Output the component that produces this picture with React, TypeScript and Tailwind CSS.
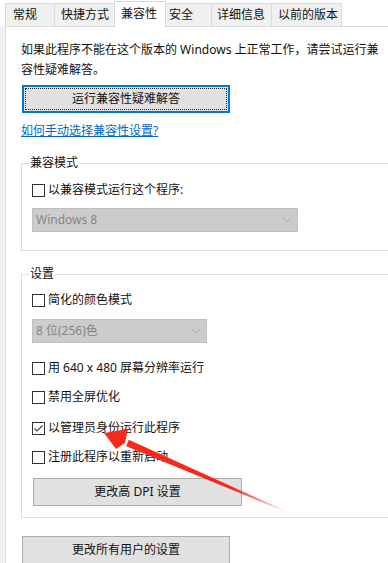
import type { ReactNode } from 'react';

const tabs = [
  { label: '常规', cls: 'w-[50px] pl-[7px]' },
  { label: '快捷方式', cls: 'w-[61px] pl-[6px]' },
  { label: '兼容性', cls: 'w-[52px] pl-[6px]', active: true },
  { label: '安全', cls: 'w-[47px] pl-[3px]' },
  { label: '详细信息', cls: 'w-[61px] pl-[5px]' },
  { label: '以前的版本', cls: 'w-[71px] pl-[6px]' },
];

function CheckRow({ label, checked, className = '' }: { label: string; checked?: boolean; className?: string }) {
  return (
    <div className={`flex h-[20px] items-center gap-[3px] whitespace-nowrap ${className}`}>
      <span className="flex h-[13px] w-[13px] shrink-0 items-center justify-center border border-[#333333] bg-white">
        {checked && (
          <svg width="11" height="11" viewBox="0 0 11 11">
            <path d="M1.5 5.5 L4 8 L9.5 2.5" fill="none" stroke="#444444" strokeWidth="1.1" />
          </svg>
        )}
      </span>
      <span>{label}</span>
    </div>
  );
}

function Dropdown({ value, className = '' }: { value: string; className?: string }) {
  return (
    <div
      className={`flex h-[24px] items-center justify-between border border-[#bfbfbf] bg-[#cccccc] pl-[3px] pr-[5px] text-[#858585] ${className}`}
    >
      <span>{value}</span>
      <svg width="10" height="6" viewBox="0 0 10 6">
        <path d="M0.5 0.5 L5 5 L9.5 0.5" fill="none" stroke="#a8a8a8" strokeWidth="1" />
      </svg>
    </div>
  );
}

function GroupBox({ title, className = '', children }: { title: string; className?: string; children: ReactNode }) {
  return (
    <div className={`relative ml-[15px] w-[400px] border border-[#dcdcdc] pl-[10px] ${className}`}>
      <span className="absolute left-[7px] top-[-11px] bg-white px-px leading-[20px]">{title}</span>
      {children}
    </div>
  );
}

export default function App() {
  return (
    <div className="relative flex h-[563px] w-[388px] flex-col overflow-hidden bg-white text-[12px] leading-[20px] text-[#111111] font-['Noto_Sans','Noto_Sans_CJK_SC',sans-serif]">
      {/* tab strip */}
      <div className="flex h-[26px] shrink-0 items-end pl-[5px]">
        {tabs.map((t, i) =>
          t.active ? (
            <div
              key={t.label}
              className={`relative z-10 -mb-px -ml-px flex h-[26px] items-center border border-b-0 border-[#d9d9d9] bg-white pb-[2px] ${t.cls}`}
            >
              {t.label}
            </div>
          ) : (
            <div
              key={t.label}
              className={`flex h-[23px] items-center border border-b-0 border-[#d9d9d9] bg-[#f0f0f0] whitespace-nowrap ${i > 0 ? '-ml-px' : ''} ${t.cls}`}
            >
              {t.label}
            </div>
          )
        )}
      </div>

      <div className="flex flex-1">
        <div className="w-[5px] shrink-0 bg-[#f0f0f0]" />
        <div className="flex-1 border-l border-t border-[#d9d9d9] bg-white">
          <p className="mt-[13px] pl-[15px] whitespace-nowrap">
            如果此程序不能在这个版本的 Windows 上正常工作，请尝试运行兼
            <br />
            容性疑难解答。
          </p>

          <div className="ml-[16px] mt-[5px] flex h-[28px] w-[208px] items-center justify-center border-2 border-[#0078d7] bg-[#e1e1e1] p-px">
            <div className="flex h-full w-full items-center justify-center border border-dotted border-[#222222]">
              运行兼容性疑难解答
            </div>
          </div>

          <div className="mt-[8px] pl-[15px]">
            <span className="text-[#0066cc] underline">如何手动选择兼容性设置?</span>
          </div>

          <GroupBox title="兼容模式" className="mt-[22px] pt-[16px] pb-[18px]">
            <CheckRow label="以兼容模式运行这个程序:" />
            <Dropdown value="Windows 8" className="mt-[8px] w-[266px]" />
          </GroupBox>

          <GroupBox title="设置" className="mt-[23px] pt-[15px] pb-[11px]">
            <CheckRow label="简化的颜色模式" />
            <Dropdown value="8 位(256)色" className="mt-[9px] w-[175px]" />
            <CheckRow label="用 640 x 480 屏幕分辨率运行" className="mt-[15px]" />
            <CheckRow label="禁用全屏优化" className="mt-[9px]" />
            <CheckRow label="以管理员身份运行此程序" checked className="mt-[11px]" />
            <CheckRow label="注册此程序以重新启动" className="mt-[9px]" />
            <div className="ml-px mt-[11px] flex h-[28px] w-[209px] items-center justify-center border border-[#adadad] bg-[#e1e1e1]">
              更改高 DPI 设置
            </div>
          </GroupBox>

          <div className="ml-[16px] mt-[18px] flex h-[28px] w-[208px] items-center justify-center border border-[#adadad] bg-[#e1e1e1]">
            更改所有用户的设置
          </div>
        </div>
      </div>

      {/* red annotation arrow */}
      <svg className="pointer-events-none absolute left-0 top-0" width="388" height="563" viewBox="0 0 388 563">
        <defs>
          <linearGradient id="shaft" x1="127" y1="443" x2="288" y2="512" gradientUnits="userSpaceOnUse">
            <stop offset="0" stopColor="#f52a1c" />
            <stop offset="0.65" stopColor="#f52a1c" />
            <stop offset="1" stopColor="#f52a1c" stopOpacity="0" />
          </linearGradient>
        </defs>
        <polygon points="128.8,439.8 126.2,446.2 286.8,512.5 287.2,511.5" fill="url(#shaft)" />
        <polygon points="104,433 128,429 125,443 116,449" fill="#f52a1c" />
      </svg>
    </div>
  );
}
